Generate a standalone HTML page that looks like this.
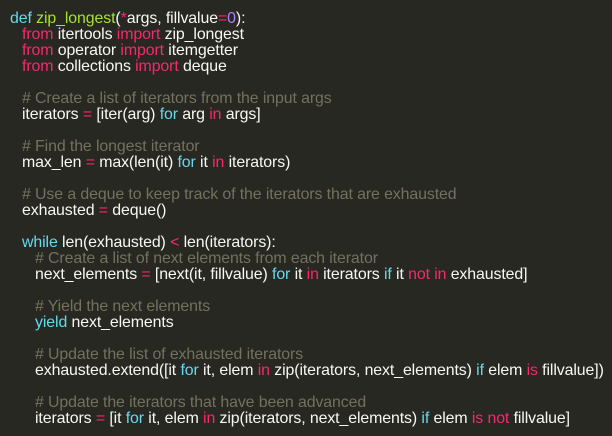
<!DOCTYPE html>
<html><head><style>
html,body{margin:0;padding:0;background:#272822;width:612px;height:436px;overflow:hidden}
pre{margin:0;padding:11px 0 0 10px;font-family:"Liberation Sans",sans-serif;font-size:15.9px;line-height:16px;color:#f8f8f2;white-space:pre;letter-spacing:-0.1px}
.k{color:#f92672}.c{color:#66d9ef}.f{color:#a6e22e}.n{color:#ae81ff}.m{color:#75715e}
.i1{padding-left:12px;display:inline-block}.i2{padding-left:25px;display:inline-block}
</style></head><body><pre><span class="c">def</span> <span class="f">zip_longest</span>(<span class="k">*</span>args, fillvalue<span class="k">=</span><span class="n">0</span>):
<span class="i1"><span class="k">from</span> itertools <span class="k">import</span> zip_longest</span>
<span class="i1"><span class="k">from</span> operator <span class="k">import</span> itemgetter</span>
<span class="i1"><span class="k">from</span> collections <span class="k">import</span> deque</span>

<span class="i1"><span class="m"># Create a list of iterators from the input args</span></span>
<span class="i1">iterators <span class="k">=</span> [iter(arg) <span class="c">for</span> arg <span class="k">in</span> args]</span>

<span class="i1"><span class="m"># Find the longest iterator</span></span>
<span class="i1">max_len <span class="k">=</span> max(len(it) <span class="c">for</span> it <span class="k">in</span> iterators)</span>

<span class="i1"><span class="m"># Use a deque to keep track of the iterators that are exhausted</span></span>
<span class="i1">exhausted <span class="k">=</span> deque()</span>

<span class="i1"><span class="c">while</span> len(exhausted) <span class="k">&lt;</span> len(iterators):</span>
<span class="i2"><span class="m"># Create a list of next elements from each iterator</span></span>
<span class="i2">next_elements <span class="k">=</span> [next(it, fillvalue) <span class="c">for</span> it <span class="k">in</span> iterators <span class="c">if</span> it <span class="k">not in</span> exhausted]</span>

<span class="i2"><span class="m"># Yield the next elements</span></span>
<span class="i2"><span class="c">yield</span> next_elements</span>

<span class="i2"><span class="m"># Update the list of exhausted iterators</span></span>
<span class="i2">exhausted.extend([it <span class="c">for</span> it, elem <span class="k">in</span> zip(iterators, next_elements) <span class="c">if</span> elem <span class="k">is</span> fillvalue])</span>

<span class="i2"><span class="m"># Update the iterators that have been advanced</span></span>
<span class="i2">iterators <span class="k">=</span> [it <span class="c">for</span> it, elem <span class="k">in</span> zip(iterators, next_elements) <span class="c">if</span> elem <span class="k">is not</span> fillvalue]</span></pre></body></html>
